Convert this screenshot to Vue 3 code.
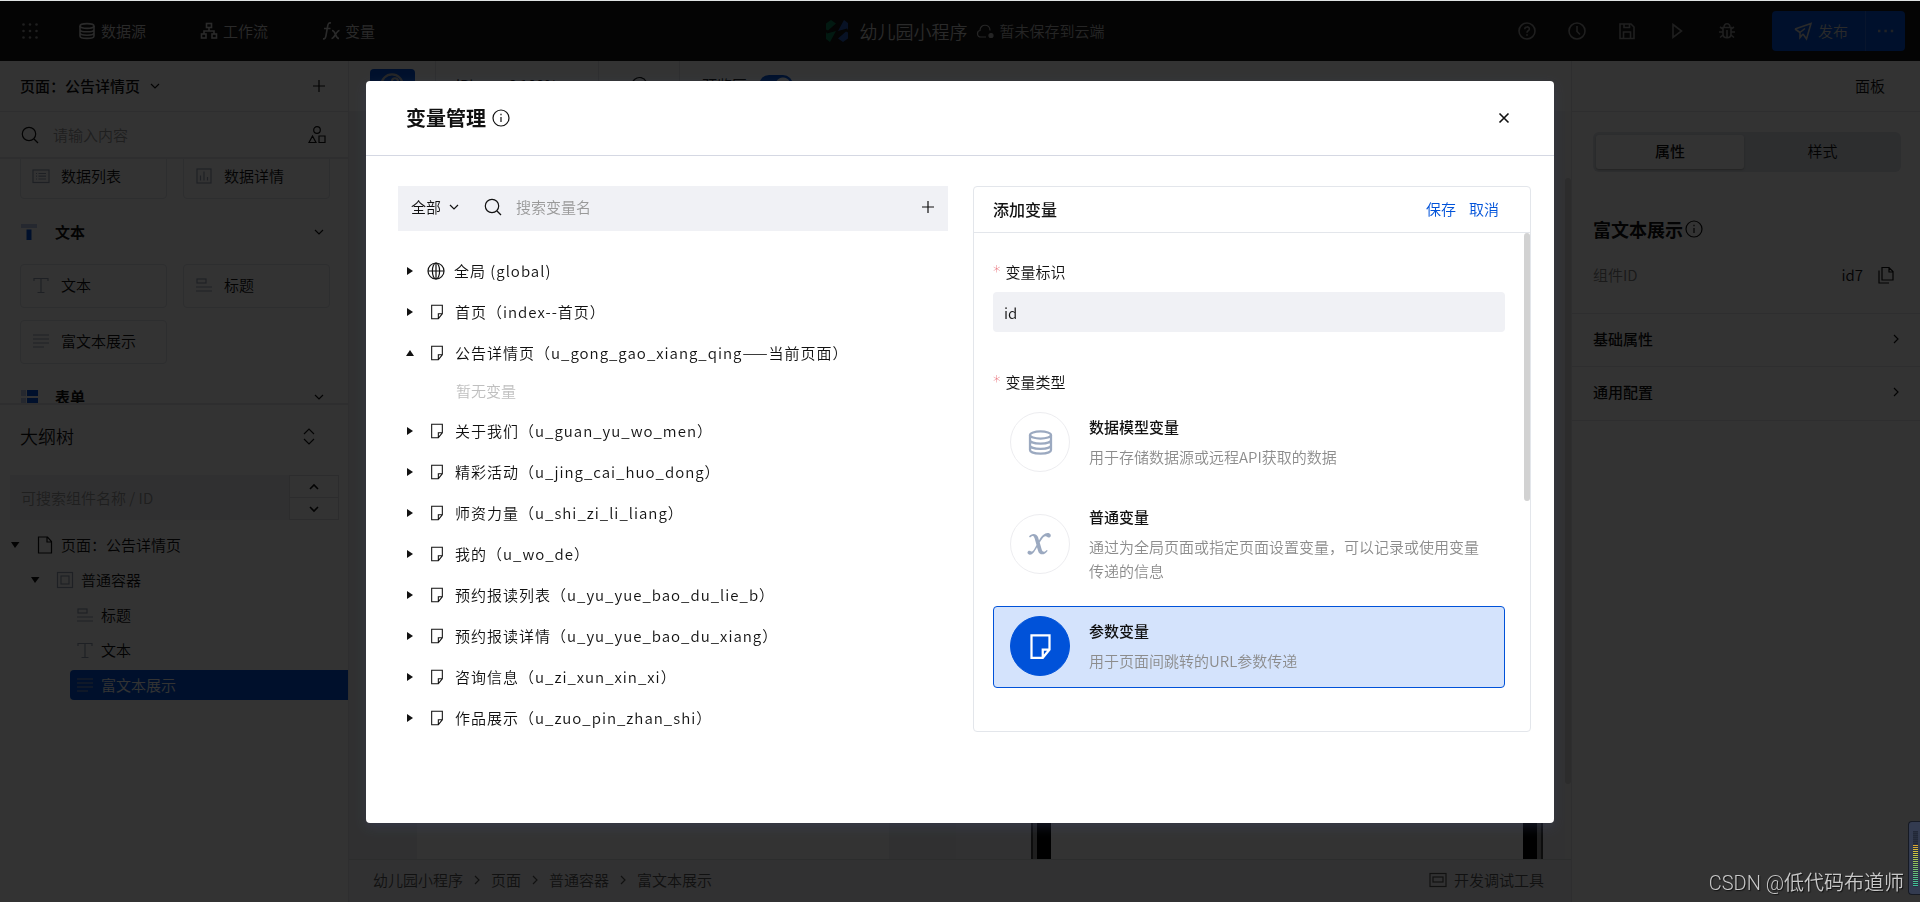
<script setup>
import { ref } from 'vue'

const icons = {
  database:
    '<ellipse cx="9" cy="4" rx="7" ry="2.4"/><path d="M2 4v10c0 1.400 3 2.400 7 2.400s7-1 7-2.400V4M2 7.400c0 1.400 3 2.400 7 2.400s7-1 7-2.400M2 10.800c0 1.400 3 2.400 7 2.400s7-1 7-2.400"/>',
  flow:
    '<rect x="6.500" y="1.500" width="5" height="4"/><rect x="1.500" y="12" width="4.500" height="4"/><rect x="12" y="12" width="4.500" height="4"/><path d="M9 5.500v3.500M4 12V9h10v3"/>',
  fx:
    '<path d="M9 1C6.500.5 6 2 5.600 4.500L4 13.500C3.600 16 2.800 17.200 1 16.800M2 6.500h6.500M10 8.500c2 0 2.500 1.500 3.500 4s1.500 4 3.500 4M17.500 8.500c-1.500 0-2.500 1.500-4 4s-2.500 4-4 4"/>',
  search: '<circle cx="8" cy="8" r="6.700"/><path d="M13 13l4 4"/>',
  shapes:
    '<circle cx="9" cy="4" r="3.300"/><path d="M4.500 10L8 16.500H1zM11 10h6v6.500h-6z"/>',
  note: '<path d="M3 1.500h12v9.500L10.500 16.500H3zM15 11h-4.500v5.500"/>',
  globe:
    '<circle cx="9" cy="9" r="8"/><ellipse cx="9" cy="9" rx="3.600" ry="8"/><path d="M1 9h16M9 1v16"/>',
  info: '<circle cx="9" cy="9" r="8"/><path d="M9 8v5M9 4.800v1.400"/>',
  help: '<circle cx="9" cy="9" r="8"/><path d="M6.700 7.200c0-3 4.700-3 4.700-.2 0 1.600-2.400 1.900-2.400 3.800M9 12.300v1.500"/>',
  clock: '<circle cx="9" cy="9" r="8"/><path d="M9 4v5.500l3 3"/>',
  save: '<path d="M2 2h11l3 3v11.500H2zM6 2v3.500h5.500V2M5.500 16v-6h7v6"/>',
  play: '<path d="M5 2.500l8.500 6.500L5 15.500z"/>',
  bug:
    '<path d="M5 5.500h8v6.500c0 5-8 5-8 0zM6 5.500c0-5 6-5 6 0M9 8v7.500M5 10H1M17 10h-4M5 7L2 5M13 7l3-2M5 13l-3 2.500M13 13l3 2.500"/>',
  send: '<path d="M1 7l16-5.500L12.500 17 9 12M1 7l5 3.500v5L9 12M6 10.500l5-4"/>',
  more: '<path stroke-dasharray="2.400 4" d="M1 9h17"/>',
  cloud: '<path d="M10 15H5C.5 15 .5 9 4 8.500 4 1.500 14 1.500 14 8.500"/><circle cx="15" cy="13.500" r="2" fill="currentColor"/>',
  plus: '<path d="M9 3v12M3 9h12"/>',
  close: '<path d="M4.500 4.500l9 9M13.500 4.500l-9 9"/>',
  down: '<path d="M5 7l4 4 4-4"/>',
  up: '<path d="M5 11l4-4 4 4"/>',
  right: '<path d="M7 5l4 4-4 4"/>',
  updown: '<path d="M4 7l5-5 5 5M4 12l5 5 5-5"/>',
  list: '<rect x="1" y="3" width="16" height="12.500"/><path d="M4 6.500h1M4 9.200h1M4 12h1M6.500 6.500H14M6.500 9.200H14M6.500 12H14"/>',
  chart: '<rect x="2" y="2" width="14" height="14"/><path d="M5.500 8.500v5M9 4.500v9M12.500 10v3.500"/>',
  text: '<path d="M2 5V2.500h14V5M9 2.500v14M5.500 16.500h7"/>',
  heading: '<rect x="2" y="3" width="9" height="4"/><path d="M1 11h16M1 15h16"/>',
  rich: '<path d="M1 3h16M1 7h16M1 11h16M1 15h11"/>',
  file: '<path d="M2.500 1h9l4 4.500V17h-13zM11 1v5h4.500"/>',
  box: '<rect x="1.500" y="1.500" width="15" height="15"/><rect x="5" y="5" width="8" height="8"/>',
  copy: '<path d="M5 1.500h7l4 4V14H5zM12 1.500V6h4M2 4.500V17h10"/>',
  console: '<rect x="1" y="2.500" width="16" height="13"/><rect x="4" y="6" width="10" height="5"/>',
}

const navItems = [
  { label: '数据源', icon: 'database' },
  { label: '工作流', icon: 'flow' },
  { label: '变量', icon: 'fx' },
]
const tools = [
  { label: '帮助', icon: 'help' },
  { label: '历史', icon: 'clock' },
  { label: '保存', icon: 'save' },
  { label: '预览', icon: 'play' },
  { label: '调试', icon: 'bug' },
]
const outline = [
  { label: '页面：公告详情页', icon: 'file', level: 0 },
  { label: '普通容器', icon: 'box', level: 1 },
  { label: '标题', icon: 'heading', level: 2 },
  { label: '文本', icon: 'text', level: 2 },
  { label: '富文本展示', icon: 'rich', level: 2, active: true },
]
const scopes = [
  { label: '全局 (global)', icon: 'globe' },
  { label: '首页（index--首页）', icon: 'note' },
  { label: '公告详情页（u_gong_gao_xiang_qing——当前页面）', icon: 'note', open: true },
  { label: '关于我们（u_guan_yu_wo_men）', icon: 'note' },
  { label: '精彩活动（u_jing_cai_huo_dong）', icon: 'note' },
  { label: '师资力量（u_shi_zi_li_liang）', icon: 'note' },
  { label: '我的（u_wo_de）', icon: 'note' },
  { label: '预约报读列表（u_yu_yue_bao_du_lie_b）', icon: 'note' },
  { label: '预约报读详情（u_yu_yue_bao_du_xiang）', icon: 'note' },
  { label: '咨询信息（u_zi_xun_xin_xi）', icon: 'note' },
  { label: '作品展示（u_zuo_pin_zhan_shi）', icon: 'note' },
]
const types = [
  { value: 'model', title: '数据模型变量', desc: '用于存储数据源或远程API获取的数据' },
  { value: 'normal', title: '普通变量', desc: '通过为全局页面或指定页面设置变量，可以记录或使用变量传递的信息' },
  { value: 'param', title: '参数变量', desc: '用于页面间跳转的URL参数传递' },
]
const crumbs = ['幼儿园小程序', '页面', '普通容器', '富文本展示']

const variableId = ref('id')
const variableType = ref('param')
const preview = ref(true)
</script>

<template>
  <div class="app">
    <header class="topbar">
      <nav class="top-left">
        <button class="plain grid-btn" aria-label="应用">
          <svg class="icon" viewBox="0 0 18 18"><g fill="currentColor" stroke="none">
            <template v-for="r in 3" :key="r"><circle v-for="c in 3" :key="c" :cx="c * 6.5 - 4" :cy="r * 6.5 - 4" r="1.3" /></template>
          </g></svg>
        </button>
        <button v-for="n in navItems" :key="n.label" class="plain nav-item">
          <svg class="icon bold" viewBox="0 0 18 18" v-html="icons[n.icon]"></svg>{{ n.label }}
        </button>
      </nav>
      <div class="top-center">
        <svg class="logo" viewBox="0 0 24 24">
          <path fill="#0b7f55" d="M1 4.500L6 1l5 3.500L3 11.500l-2-1zM1 13l1 1.500 9-2.500-6 11-4-3z" />
          <path fill="#2a5cb8" d="M23 19.500L18 23l-5-3.500 8-7 2 1zM23 11l-1-1.500-9 2.500 6-11 4 3z" />
        </svg>
        <span class="app-name">幼儿园小程序</span>
        <svg class="icon cloud" viewBox="0 0 18 18" v-html="icons.cloud"></svg>
        <span class="save-state">暂未保存到云端</span>
      </div>
      <div class="top-right">
        <button v-for="t in tools" :key="t.label" class="plain tool" :aria-label="t.label">
          <svg class="icon bold" viewBox="0 0 18 18" v-html="icons[t.icon]"></svg>
        </button>
        <div class="publish">
          <button class="plain publish-main"><svg class="icon bold" viewBox="0 0 18 18" v-html="icons.send"></svg>发布</button>
          <button class="plain publish-more" aria-label="更多"><svg class="icon heavy" viewBox="0 0 18 18" v-html="icons.more"></svg></button>
        </div>
      </div>
    </header>

    <div class="workspace">
      <aside class="left">
        <div class="page-head">
          <button class="plain page-pick">页面：公告详情页<svg class="icon" viewBox="0 0 18 18" v-html="icons.down"></svg></button>
          <button class="plain" aria-label="新建页面"><svg class="icon" viewBox="0 0 18 18" v-html="icons.plus"></svg></button>
        </div>
        <div class="lib-search">
          <svg class="icon" viewBox="0 0 18 18" v-html="icons.search"></svg>
          <input type="text" placeholder="请输入内容" aria-label="搜索组件" />
          <button class="plain" aria-label="组件分类"><svg class="icon" viewBox="0 0 18 18" v-html="icons.shapes"></svg></button>
        </div>
        <div class="library">
          <div class="lib-inner">
            <div class="cards">
              <button class="card"><svg class="icon" viewBox="0 0 18 18" v-html="icons.list"></svg>数据列表</button>
              <button class="card"><svg class="icon" viewBox="0 0 18 18" v-html="icons.chart"></svg>数据详情</button>
            </div>
            <h3 class="group">
              <svg class="group-icon" viewBox="0 0 18 18"><path fill="#b9c8ea" d="M1 1h16v4H1z" /><path fill="#0052d9" d="M6.500 6.500h5V17h-5z" /></svg>
              文本<svg class="icon fold" viewBox="0 0 18 18" v-html="icons.down"></svg>
            </h3>
            <div class="cards">
              <button class="card"><svg class="icon" viewBox="0 0 18 18" v-html="icons.text"></svg>文本</button>
              <button class="card"><svg class="icon" viewBox="0 0 18 18" v-html="icons.heading"></svg>标题</button>
              <button class="card"><svg class="icon" viewBox="0 0 18 18" v-html="icons.rich"></svg>富文本展示</button>
            </div>
            <h3 class="group">
              <svg class="group-icon" viewBox="0 0 18 18"><path fill="#b9c8ea" d="M1 2h5v6H1zM1 10h5v6H1z" /><path fill="#0052d9" d="M7 2h11v6H7zM7 10h11v6H7z" /></svg>
              表单<svg class="icon fold" viewBox="0 0 18 18" v-html="icons.down"></svg>
            </h3>
          </div>
        </div>
        <section class="outline">
          <div class="outline-head">
            <h2>大纲树</h2>
            <button class="plain" aria-label="展开大纲"><svg class="icon" viewBox="0 0 18 18" v-html="icons.updown"></svg></button>
          </div>
          <div class="outline-search">
            <input type="text" placeholder="可搜索组件名称 / ID" aria-label="搜索大纲" />
            <div class="stepper">
              <button class="plain" aria-label="上一个"><svg class="icon bold" viewBox="0 0 18 18" v-html="icons.up"></svg></button>
              <button class="plain" aria-label="下一个"><svg class="icon bold" viewBox="0 0 18 18" v-html="icons.down"></svg></button>
            </div>
          </div>
          <ul class="outline-tree">
            <li v-for="o in outline" :key="o.label">
              <button class="plain node" :class="['level-' + o.level, { active: o.active }]">
                <svg v-if="o.level < 2" class="caret" viewBox="0 0 16 16"><path d="M4 5h8.500L8 11z" /></svg>
                <svg class="icon node-icon" viewBox="0 0 18 18" v-html="icons[o.icon]"></svg>{{ o.label }}
              </button>
            </li>
          </ul>
        </section>
      </aside>

      <main class="stage">
        <div class="stage-bar">
          <div class="cell device"><button class="plain device-btn" aria-label="小程序"><svg class="icon bold" viewBox="0 0 18 18"><circle cx="9" cy="9" r="8" /><path d="M9 12c0 3-4.500 2.500-4.500 0 0-1.500 1-2 2-2M9 12V6c0-3 4.500-2.500 4.500 0 0 1.500-1 2-2 2" /></svg></button></div>
          <div class="cell model">iPhone 6 100%</div>
          <div class="cell rotate"><button class="plain" aria-label="刷新"><svg class="icon" viewBox="0 0 18 18"><path d="M1 5v5h4M2 9a7.500 7.500 0 1 1 3 6" /></svg></button></div>
          <label class="cell preview">预览区<input v-model="preview" class="switch" type="checkbox" /></label>
        </div>
        <div class="canvas">
          <div class="artboard"></div>
          <div class="preview-area">
            <div class="phone"></div>
          </div>
          <div class="track"><div class="thumb"></div></div>
        </div>
        <footer class="footer">
          <nav class="crumbs">
            <template v-for="(c, i) in crumbs" :key="c">
              <svg v-if="i" class="icon crumb-sep" viewBox="0 0 18 18" v-html="icons.right"></svg>
              <a href="#">{{ c }}</a>
            </template>
          </nav>
          <button class="plain dev"><svg class="icon" viewBox="0 0 18 18" v-html="icons.console"></svg>开发调试工具</button>
        </footer>
      </main>

      <aside class="right">
        <div class="panel-head"><button class="plain">面板</button></div>
        <div class="tabs" role="tablist">
          <button class="tab on" role="tab" aria-selected="true">属性</button>
          <button class="tab" role="tab" aria-selected="false">样式</button>
        </div>
        <h2 class="comp-name">富文本展示<svg class="icon" viewBox="0 0 18 18" v-html="icons.info"></svg></h2>
        <div class="comp-id">
          <span class="key">组件ID</span><span>id7</span>
          <button class="plain" aria-label="复制"><svg class="icon" viewBox="0 0 18 18" v-html="icons.copy"></svg></button>
        </div>
        <button class="fold-row">基础属性<svg class="icon" viewBox="0 0 18 18" v-html="icons.right"></svg></button>
        <button class="fold-row last">通用配置<svg class="icon" viewBox="0 0 18 18" v-html="icons.right"></svg></button>
      </aside>
    </div>

    <div class="mask">
      <section class="modal" role="dialog" aria-labelledby="dialog-title">
        <header class="modal-head">
          <h1 id="dialog-title">变量管理</h1>
          <svg class="icon" viewBox="0 0 18 18" v-html="icons.info"></svg>
          <button class="plain close" aria-label="关闭"><svg class="icon bold" viewBox="0 0 18 18" v-html="icons.close"></svg></button>
        </header>
        <div class="modal-body">
          <div class="browser">
            <div class="filter">
              <select aria-label="变量范围"><option>全部</option></select>
              <svg class="icon filter-arrow" viewBox="0 0 18 18" v-html="icons.down"></svg>
              <svg class="icon" viewBox="0 0 18 18" v-html="icons.search"></svg>
              <input type="text" placeholder="搜索变量名" aria-label="搜索变量名" />
              <button class="plain" aria-label="新增变量"><svg class="icon" viewBox="0 0 18 18" v-html="icons.plus"></svg></button>
            </div>
            <ul class="scopes">
              <li v-for="s in scopes" :key="s.label">
                <button class="plain scope" :aria-expanded="!!s.open">
                  <svg class="caret" viewBox="0 0 16 16"><path :d="s.open ? 'M4 11h8L8 5z' : 'M5 4l6 4-6 4z'" /></svg>
                  <svg class="icon" :class="s.icon" viewBox="0 0 18 18" v-html="icons[s.icon]"></svg>{{ s.label }}
                </button>
                <p v-if="s.open" class="empty">暂无变量</p>
              </li>
            </ul>
          </div>
          <form class="editor" @submit.prevent>
            <div class="editor-head">
              <h2>添加变量</h2>
              <button class="plain link">保存</button>
              <button class="plain link" type="button">取消</button>
            </div>
            <div class="fields">
              <label class="field-label" for="variable-id"><span class="star">*</span>变量标识</label>
              <input id="variable-id" v-model="variableId" class="id-input" type="text" />
              <fieldset class="types">
                <legend class="field-label"><span class="star">*</span>变量类型</legend>
                <label v-for="t in types" :key="t.value" class="type" :class="{ chosen: variableType === t.value }">
                  <input v-model="variableType" class="type-radio" type="radio" name="type" :value="t.value" />
                  <span class="badge">
                    <svg v-if="t.value === 'model'" class="badge-icon" viewBox="0 0 18 18" v-html="icons.database"></svg>
                    <svg v-else-if="t.value === 'normal'" class="badge-icon italic" viewBox="0 0 24 24"><path fill="currentColor" stroke="none" d="M1 4.500C3 1.500 8 .5 10 5l1 3.500C14 3 18 0 21.500 1.500c2.500 1.500 1 4.500-1 4-1.500-.5-2-2-4-1-1.500.8-3 3-4.800 6l2 7c.8 2.800 3 3 5 .5l1 .7c-3 4.500-8 5-9.500.5L9 15.200C6 20.500 4 23.500 1 22.500c-2.500-1-1.500-4 .5-3.800 1.500.2 1.800 1.300 3 .5C6 18.200 7 16 8.500 13L6.500 6C5.500 3 4 3.500 2 5.500z" /></svg>
                    <svg v-else class="badge-icon" viewBox="0 0 18 18" v-html="icons.note"></svg>
                  </span>
                  <span class="type-text"><strong>{{ t.title }}</strong><span class="desc">{{ t.desc }}</span></span>
                </label>
              </fieldset>
            </div>
            <div class="editor-thumb"></div>
          </form>
        </div>
      </section>
    </div>

    <div class="watermark">CSDN @低代码布道师</div>
    <div class="meter"><div class="meter-bars"></div></div>
  </div>
</template>

<style>
body {
  margin: 0;
  overflow: hidden;
}
</style>

<style scoped>
* {
  box-sizing: border-box;
}
.app {
  display: flex;
  flex-direction: column;
  height: 100vh;
  border-top: 1px solid #dfe3e3;
  background: #fff;
  color: #111;
  font-family: "Noto Sans CJK SC", "Liberation Sans", sans-serif;
  font-size: 15px;
  font-weight: 350;
  line-height: 24px;
}
h1, h2, h3, p, ul, fieldset {
  margin: 0;
  padding: 0;
  border: 0;
  min-width: 0;
}
li {
  list-style: none;
}
button, input, select {
  font: inherit;
  color: inherit;
}
.plain {
  display: flex;
  align-items: center;
  padding: 0;
  border: 0;
  background: none;
  white-space: nowrap;
}
input {
  min-width: 0;
  padding: 0;
  border: 0;
  background: none;
  outline: none;
}
.icon, .badge-icon {
  display: block;
  flex: none;
  width: 18px;
  height: 18px;
  fill: none;
  stroke: currentColor;
  stroke-width: 1.2;
  overflow: visible;
}
.bold {
  stroke-width: 1.6;
}
.heavy {
  stroke-width: 2.4;
}

/* top bar */
.topbar {
  flex: none;
  display: flex;
  align-items: center;
  height: 60px;
  background: #141414;
  color: #d0d0d0;
}
.top-left, .top-right {
  flex: 1 1 0;
  display: flex;
  align-items: center;
}
.top-left {
  gap: 54px;
  padding-left: 21px;
}
.grid-btn {
  color: #999;
  margin-right: -15px;
}
.nav-item {
  gap: 5px;
}
.top-center {
  display: flex;
  align-items: center;
  padding-left: 3px;
}
.logo {
  width: 24px;
  height: 24px;
  margin-right: 11px;
}
.app-name {
  font-size: 18px;
}
.cloud {
  margin: 0 6px 0 8px;
}
.cloud, .save-state {
  color: #bbb;
}
.top-right {
  justify-content: flex-end;
  padding-right: 15px;
}
.tool {
  color: #999;
  margin-right: 32px;
}
.publish {
  display: flex;
  height: 40px;
  margin-left: 4px;
  border-radius: 4px;
  background: #0052d9;
}
.publish-main {
  gap: 6px;
  padding: 0 17px 0 22px;
}
.publish-more {
  width: 40px;
  justify-content: center;
  border-left: 1px solid #2a6be0;
  color: #a0a8b8;
}

/* frame */
.workspace {
  flex: 1;
  display: flex;
  min-height: 0;
}
.left {
  flex: none;
  display: flex;
  flex-direction: column;
  width: 349px;
  border-right: 1px solid #e4e6ea;
}
.page-head, .lib-search, .outline-head {
  flex: none;
  display: flex;
  align-items: center;
  justify-content: space-between;
  padding: 0 20px;
}
.page-head {
  height: 51px;
  border-bottom: 1px solid #e4e6ea;
}
.page-pick {
  gap: 6px;
  font-weight: 500;
}
.lib-search {
  height: 47px;
  gap: 14px;
  padding: 0 22px 0 21px;
  border-bottom: 2px solid #e4e6ea;
}
.lib-search input {
  flex: 1;
}
.lib-search input::placeholder, .outline-search input::placeholder {
  color: #999;
  opacity: 1;
}
.library {
  flex: none;
  height: 244px;
  overflow: hidden;
}
.lib-inner {
  margin-top: -4px;
}
.cards {
  display: grid;
  grid-template-columns: 1fr 1fr;
  gap: 12px 16px;
  padding: 0 18px 0 20px;
}
.card {
  display: flex;
  align-items: center;
  gap: 11px;
  height: 44px;
  padding: 0 11px 2px;
  border: 1px solid #e0e3e8;
  border-radius: 4px;
  background: #fff;
}
.card .icon {
  color: #96a0b4;
}
.group {
  display: flex;
  align-items: center;
  height: 65px;
  padding: 0 20px;
  font-size: 15px;
  font-weight: 700;
}
.group-icon {
  width: 18px;
  height: 18px;
  margin-right: 17px;
}
.fold {
  margin-left: auto;
}
.outline {
  border-top: 2px solid #e4e6ea;
}
.outline-head {
  height: 61px;
  padding: 0 30px 0 20px;
}
.outline-head h2 {
  font-size: 18px;
  font-weight: inherit;
}
.outline-search {
  display: flex;
  height: 45px;
  margin: 9px 9px 10px 10px;
  background: #f0f1f5;
}
.outline-search input {
  flex: 1;
  padding: 0 11px;
}
.stepper {
  display: flex;
  flex-direction: column;
  width: 50px;
  border: 1px solid #d9dce2;
  background: #fff;
}
.stepper button {
  flex: 1;
  justify-content: center;
}
.stepper button + button {
  border-top: 1px solid #d9dce2;
}
.outline-tree {
  display: flex;
  flex-direction: column;
  gap: 5px;
}
.caret {
  flex: none;
  width: 16px;
  height: 16px;
  fill: currentColor;
}
.node {
  width: 100%;
  height: 30px;
}
.level-0 {
  padding-left: 7px;
}
.level-1 {
  padding-left: 27px;
}
.node .caret {
  margin-right: 13px;
}
.node-icon {
  margin-right: 7px;
  color: #96a0b4;
}
.level-0 .node-icon {
  color: inherit;
}
.level-2 {
  width: auto;
  margin-left: 70px;
  padding-left: 6px;
}
.node.active {
  width: calc(100% - 70px);
  border-radius: 4px 0 0 4px;
  background: #0052d9;
  color: #fff;
}

/* stage */
.stage {
  flex: 1;
  display: flex;
  flex-direction: column;
  min-width: 0;
}
.stage-bar {
  flex: none;
  display: flex;
  height: 50px;
}
.cell {
  display: flex;
  align-items: center;
  justify-content: center;
  padding-bottom: 3px;
  border-left: 1px solid #e4e6ea;
}
.device {
  width: 86px;
}
.cell.device {
  border-left: 0;
}
.device-btn {
  width: 45px;
  height: 32px;
  justify-content: center;
  border-radius: 4px;
  background: #0052d9;
  color: #bbb;
}
.device-btn .icon {
  width: 24px;
  height: 24px;
}
.model {
  width: 163px;
  padding-right: 20px;
}
.rotate {
  width: 81px;
}
.preview {
  gap: 12px;
  padding-left: 22px;
}
.switch {
  appearance: none;
  width: 34px;
  height: 20px;
  margin: 0;
  border-radius: 10px;
  background: radial-gradient(circle at 24px 10px, #fff 7px, #0052d9 8px);
}
.canvas {
  flex: 1;
  display: flex;
  min-height: 0;
  padding-left: 68px;
  background: #f0f1f4;
}
.artboard {
  width: 472px;
  background: #fff;
}
.preview-area {
  flex: 1;
  display: flex;
  justify-content: center;
  margin-left: 67px;
  padding-left: 52px;
  background: #f5f5f7;
}
.phone {
  width: 512px;
  border: solid #444;
  border-width: 0 2px;
  background: linear-gradient(90deg, #999 4px, #000 4px 18px, #fff 18px calc(100% - 18px), #000 calc(100% - 18px) calc(100% - 4px), #999 calc(100% - 4px));
}
.track {
  display: flex;
  flex-direction: column;
  width: 6px;
  padding: 67px 0 75px;
  background: #fafafa;
}
.thumb {
  flex: 1;
  border-radius: 3px;
  background: #d9d9d9;
}
.footer {
  flex: none;
  display: flex;
  align-items: center;
  justify-content: space-between;
  height: 43px;
  padding: 0 27px 2px 24px;
  border-top: 1px solid #dcdee2;
  background: #f6f6f8;
  color: #555;
}
.crumbs {
  display: flex;
  align-items: center;
}
.crumbs a {
  color: inherit;
  text-decoration: none;
}
.crumb-sep {
  margin: 0 5px;
}
.dev {
  gap: 7px;
}

/* right panel */
.right {
  flex: none;
  width: 349px;
  border-left: 1px solid #e4e6ea;
}
.panel-head {
  display: flex;
  justify-content: flex-end;
  height: 51px;
  padding: 0 35px;
  border-bottom: 1px solid #e4e6ea;
}
.tabs {
  display: grid;
  grid-template-columns: 148px 1fr;
  height: 40px;
  margin: 20px 19px 0 21px;
  padding: 3px 0 3px 3px;
  border-radius: 6px;
  background: #dfe3e9;
}
.tab {
  padding: 0 0 2px;
  border: 0;
  border-radius: 3px;
  background: none;
}
.tab.on {
  background: #fff;
  box-shadow: 0 1px 2px #aaa;
  font-weight: 500;
}
.comp-name {
  display: flex;
  align-items: center;
  gap: 2px;
  margin: 44px 0 0 21px;
  line-height: 26px;
  font-size: 18px;
}
.comp-id {
  display: flex;
  align-items: center;
  height: 40px;
  margin: 13px 25px 0 21px;
}
.comp-id .key {
  margin-right: auto;
  color: #808080;
}
.comp-id button {
  margin-left: 14px;
}
.fold-row {
  display: flex;
  align-items: center;
  justify-content: space-between;
  width: 100%;
  height: 53px;
  margin: 0;
  padding: 0 15px 2px 21px;
  border: 0;
  border-top: 1px solid #e4e6ea;
  background: none;
  font-weight: 500;
}
.comp-id + .fold-row {
  margin-top: 18px;
}
.fold-row.last {
  height: 55px;
  padding-bottom: 4px;
  border-bottom: 1px solid #e4e6ea;
}

/* dialog */
.mask {
  position: fixed;
  inset: 1px 0 0;
  display: flex;
  justify-content: center;
  align-items: flex-start;
  padding-top: 80px;
  background: rgba(0, 0, 0, 0.8);
}
.modal {
  width: min(1188px, 92vw);
  border-radius: 4px;
  background: #fff;
  box-shadow: 0 4px 12px rgba(60, 70, 110, 0.35);
}
.modal-head {
  display: flex;
  align-items: center;
  gap: 6px;
  height: 75px;
  padding: 0 41px 0 40px;
  border-bottom: 1px solid #d5d8e3;
}
.modal-head h1 {
  font-size: 20px;
  font-weight: 700;
}
.close {
  margin-left: auto;
}
.modal-body {
  display: grid;
  grid-template-columns: 550fr 558fr;
  align-items: start;
  gap: 25px;
  padding: 30px 23px 85px 32px;
}
.filter {
  display: flex;
  align-items: center;
  height: 45px;
  padding: 0 11px 4px 13px;
  background: #f0f1f5;
}
.filter select {
  appearance: none;
  width: 30px;
  padding: 0;
  border: 0;
  background: none;
}
.filter-arrow {
  margin: 0 21px 0 4px;
}
.filter input {
  flex: 1;
  margin-left: 14px;
}
.filter input::placeholder {
  color: #999;
  opacity: 1;
}
.scopes {
  padding-top: 19px;
}
.scope {
  height: 41px;
  padding-left: 4px;
  letter-spacing: 1px;
}
.scope .caret {
  margin-right: 9px;
}
.scope .icon {
  margin-right: 9px;
}
.scope .note {
  width: 16px;
  height: 16px;
  margin: 0 10px 0 2px;
}
.empty {
  padding: 6px 0 7px 58px;
  color: #bfbfbf;
}
.editor {
  position: relative;
  border: 1px solid #e3e6eb;
  border-radius: 4px;
}
.editor-head {
  display: flex;
  align-items: center;
  gap: 13px;
  height: 46px;
  padding: 0 31px 2px 19px;
  border-bottom: 1px solid #e3e6eb;
}
.editor-head h2 {
  margin-right: auto;
  font-size: 16px;
  font-weight: 500;
}
.link {
  color: #0052d9;
}
.fields {
  padding: 27px 25px 43px 19px;
}
.field-label {
  display: flex;
  gap: 5px;
  padding: 0;
}
.star {
  color: #e34d59;
  font-family: "DejaVu Sans", sans-serif;
}
.id-input {
  display: block;
  width: 100%;
  height: 40px;
  margin: 8px 0 38px;
  padding: 0 11px;
  border-radius: 4px;
  background: #f0f1f5;
}
.types {
  display: flex;
  flex-direction: column;
  gap: 8px;
}
.types legend {
  margin-bottom: 8px;
}
.type {
  display: flex;
  align-items: center;
  gap: 19px;
  padding: 12px 16px 14px;
  border: 1px solid transparent;
  border-radius: 4px;
}
.type.chosen {
  border-color: #0052d9;
  background: #d4e3fc;
}
.type-radio {
  position: absolute;
  opacity: 0;
}
.badge {
  flex: none;
  display: flex;
  align-items: center;
  justify-content: center;
  width: 60px;
  height: 60px;
  margin: -4px 0;
  border: 1px solid #ededf0;
  border-radius: 50%;
  color: #9ba9c0;
}
.chosen .badge {
  border-color: #0052d9;
  background: #0052d9;
  color: #fff;
}
.badge-icon {
  width: 27px;
  height: 27px;
  stroke-width: 1.5;
}
.badge-icon.italic {
  width: 24px;
  height: 24px;
}
.type-text {
  display: flex;
  flex-direction: column;
  gap: 6px;
}
.type-text strong {
  font-weight: 500;
}
.desc {
  color: #8c8c8c;
}
.editor-thumb {
  position: absolute;
  top: 46px;
  right: 0;
  width: 6px;
  height: 268px;
  border-radius: 3px;
  background: #d2d2d2;
}

/* screen extras */
.watermark {
  position: fixed;
  right: 16px;
  bottom: 4px;
  font-family: Roboto, "Noto Sans CJK SC", sans-serif;
  font-size: 20px;
  line-height: 30px;
  color: #c8c8c8;
  text-shadow: 1px 1px 1px #111;
}
.meter {
  position: fixed;
  right: 0;
  bottom: 7px;
  width: 12px;
  height: 74px;
  padding: 9px 2px 7px 4px;
  border: 1px solid #161a24;
  border-right: 0;
  border-radius: 4px 0 0 4px;
  background: #333b50;
}
.meter-bars {
  height: 100%;
  background:
    repeating-linear-gradient(transparent 0 1px, #283040 1px 2px),
    linear-gradient(#222838 24%, #d8a030 24%, #d0c840 40%, #88c060 60%, #38c0a0);
}
</style>
